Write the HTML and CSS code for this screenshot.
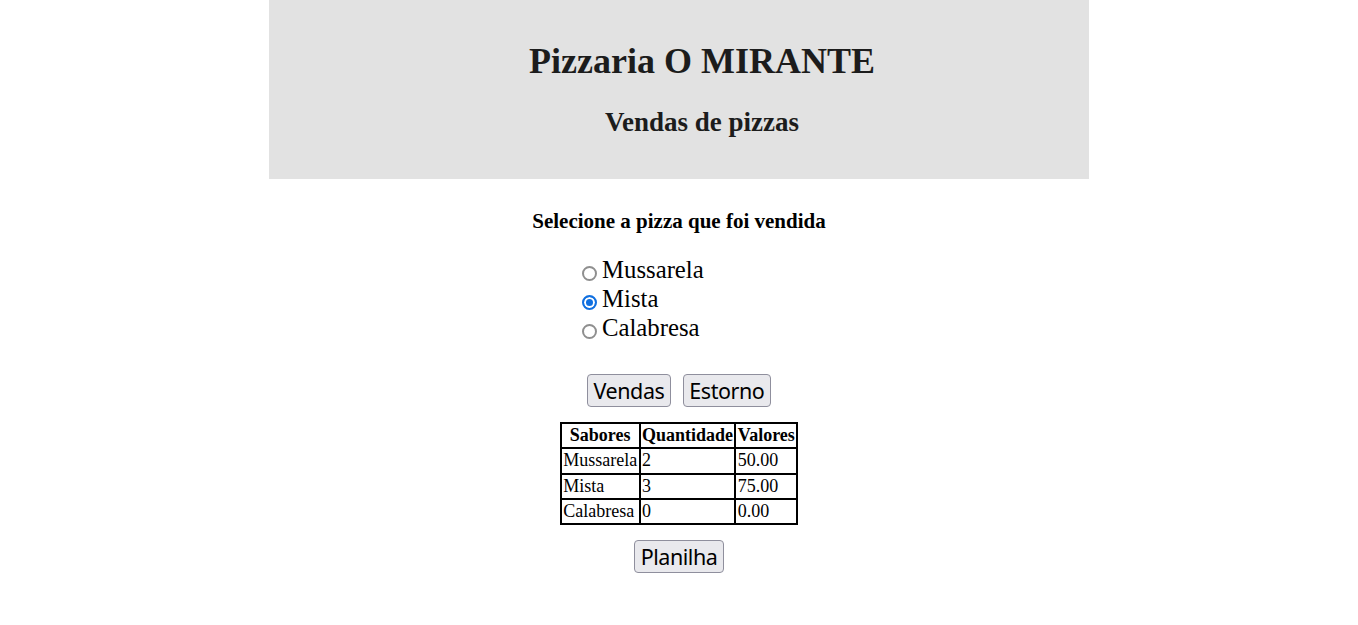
FILE: index.html
```html
<!DOCTYPE html>
<html lang="pt">
<head>
<meta charset="utf-8">
<title>Pizzaria O MIRANTE</title>
<link rel="stylesheet" href="styles.css">
</head>
<body>
<header class="topo">
  <h1 class="titulo">Pizzaria O MIRANTE</h1>
  <h2 class="subtitulo">Vendas de pizzas</h2>
</header>
<main class="conteudo">
  <h3 class="instrucao">Selecione a pizza que foi vendida</h3>
  <div class="opcoes">
    <label class="opcao"><input type="radio" name="pizza" class="radio">Mussarela</label>
    <label class="opcao"><input type="radio" name="pizza" class="radio" checked>Mista</label>
    <label class="opcao"><input type="radio" name="pizza" class="radio">Calabresa</label>
  </div>
  <div class="acoes">
    <button class="botao">Vendas</button>
    <button class="botao">Estorno</button>
  </div>
  <table class="tabela">
    <thead>
      <tr><th>Sabores</th><th>Quantidade</th><th>Valores</th></tr>
    </thead>
    <tbody>
      <tr><td>Mussarela</td><td>2</td><td>50.00</td></tr>
      <tr><td>Mista</td><td>3</td><td>75.00</td></tr>
      <tr><td>Calabresa</td><td>0</td><td>0.00</td></tr>
    </tbody>
  </table>
  <button class="botao botao-planilha">Planilha</button>
</main>
</body>
</html>
```

FILE: styles.css
```css
html, body {
  margin: 0;
  padding: 0;
  background: #ffffff;
}

body {
  font-family: "Liberation Serif", "Times New Roman", serif;
  color: #000;
}

.topo {
  width: 820px;
  height: 179px;
  box-sizing: border-box;
  margin: 0 auto;
  padding: 41px 0 0 46px;
  background: #e2e2e2;
  color: #1c1c1c;
  text-align: center;
}

.titulo {
  margin: 0;
  font-size: 36px;
  line-height: 41px;
  font-weight: bold;
}

.subtitulo {
  margin: 25px 0 0;
  font-size: 27px;
  line-height: 31px;
  font-weight: bold;
}

.conteudo {
  display: flex;
  flex-direction: column;
  align-items: center;
}

.instrucao {
  margin: 30px 0 0;
  font-size: 21px;
  line-height: 24px;
  font-weight: bold;
}

.opcoes {
  width: 240px;
  box-sizing: border-box;
  padding-left: 23px;
  margin-top: 21.5px;
  display: flex;
  flex-direction: column;
}

.opcao {
  display: flex;
  align-items: flex-start;
  font-size: 24.75px;
  line-height: 29px;
  height: 29px;
}

.radio {
  -webkit-appearance: none;
  appearance: none;
  box-sizing: border-box;
  width: 15px;
  height: 15px;
  margin: 11.5px 5px 0 0;
  flex: none;
  border: 2px solid #8f8f8f;
  border-radius: 50%;
  background: #fff;
}

.radio:checked {
  border-color: #1170e0;
  background: #1170e0;
  box-shadow: inset 0 0 0 2px #fff;
}

.acoes {
  display: flex;
  gap: 12px;
  margin-top: 32.5px;
}

.botao {
  font-family: "Noto Sans", "Segoe UI", sans-serif;
  font-size: 21.5px;
  letter-spacing: -0.45px;
  height: 33px;
  padding: 0 5.5px;
  line-height: 31px;
  color: #000;
  background: #e9e9ed;
  border: 1px solid #8f8f9d;
  border-radius: 4px;
}

.tabela {
  margin-top: 15px;
  border-collapse: collapse;
  border: 2px solid #000;
  font-size: 18px;
}

.tabela th,
.tabela td {
  border: 2px solid #000;
  padding: 1.125px 1.4px;
  line-height: 21px;
}

.tabela td {
  text-align: left;
}

.botao-planilha {
  margin-top: 15px;
}
```
